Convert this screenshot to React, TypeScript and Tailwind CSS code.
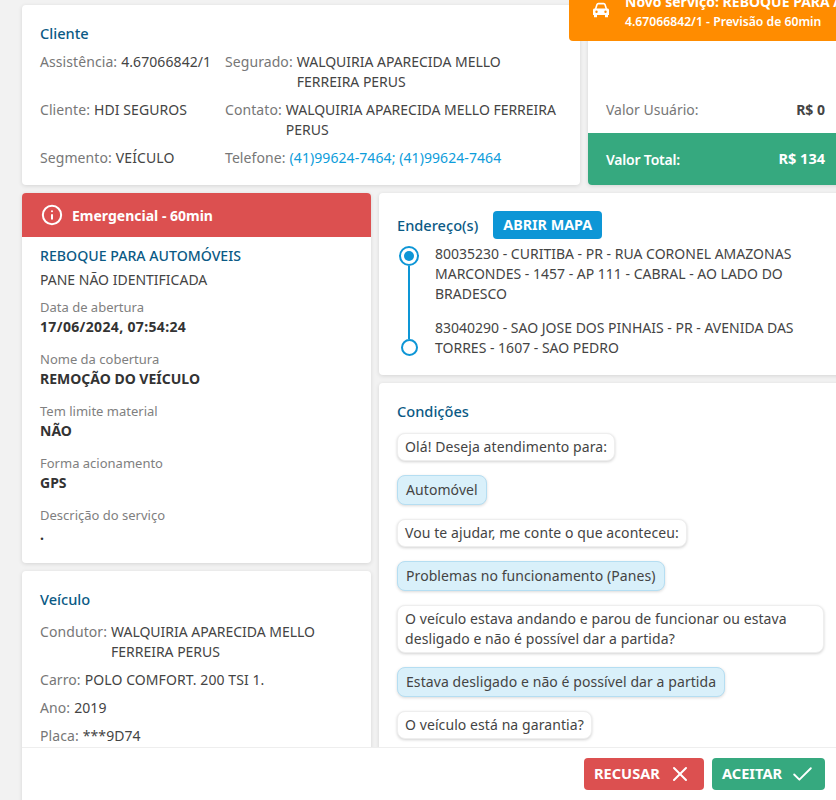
import { Check, Info, X } from 'lucide-react'

const cardClass = 'rounded bg-white shadow-[0_1px_4px_rgba(0,0,0,0.12)]'
const headingClass = 'text-[14.6px] leading-5 text-[#0b5a85] font-medium'

function Field({ label, children }: { label: string; children: React.ReactNode }) {
  return (
    <div className="flex leading-5 tracking-[0.08px]">
      <span className="shrink-0 pr-1 text-[#777]">{label}</span>
      <span className="text-[#444]">{children}</span>
    </div>
  )
}

function Name({ children }: { children: string }) {
  return <span className="tracking-[-0.02px]">{children}</span>
}

function Detail({ label, value, wide }: { label: string; value: string; wide?: boolean }) {
  return (
    <div>
      <div className="text-[13px] leading-5 text-[#808080]">{label}</div>
      <div className={`font-bold leading-5 text-[#333] ${wide ? 'tracking-[0.35px]' : ''}`}>{value}</div>
    </div>
  )
}

function Bubble({ text, answer }: { text: string; answer?: boolean }) {
  return (
    <div
      className={
        answer
          ? 'w-fit rounded-lg border border-[#b5def2] bg-[#d9f0fa] px-2 py-[4px] leading-5 tracking-[0.08px] text-[#444] shadow-[0_1px_3px_rgba(0,0,0,0.15)]'
          : 'w-fit rounded-lg border border-[#eee] bg-white px-[7px] py-[3px] leading-5 tracking-[0.08px] text-[#444] shadow-[0_1px_3px_rgba(0,0,0,0.18)]'
      }
    >
      {text}
    </div>
  )
}

function CarIcon() {
  return (
    <svg viewBox="0 0 18 16" className="mt-[2px] h-[16px] w-[18px] shrink-0 self-start" fill="currentColor">
      <path d="M3.6 7 5 2.600C5.200 2 5.700 1.600 6.300 1.600h5.400c.6 0 1.100.4 1.300 1L14.400 7" fill="none" stroke="currentColor" strokeWidth="1.600" />
      <path
        fillRule="evenodd"
        d="M2.500 6.500h13c.8 0 1.500.7 1.500 1.500v5H1V8c0-.8.7-1.500 1.500-1.500ZM4.500 8.500a1.200 1.200 0 1 0 0 2.400 1.200 1.200 0 0 0 0-2.400Zm9 0a1.200 1.200 0 1 0 0 2.400 1.200 1.200 0 0 0 0-2.400Z"
      />
      <path d="M2 13h3v2.200H2zM13 13h3v2.200h-3z" />
    </svg>
  )
}

export default function App() {
  return (
    <div className="relative h-[800px] w-[836px] overflow-hidden bg-[#f2f2f2] pl-[22px] pt-[5px] font-['Noto_Sans','Open_Sans',sans-serif] text-[14px]">
      {/* Novo serviço banner */}
      <div className="absolute right-0 top-0 z-20 flex h-[41px] w-[267px] items-end gap-[15px] overflow-hidden rounded-bl bg-[#ff8c00] pb-[11px] pl-[23px] text-white">
        <CarIcon />
        <div className="whitespace-nowrap">
          <div className="text-[14px] font-bold leading-5">Novo serviço: REBOQUE PARA AUTOMÓVEIS</div>
          <div className="-mb-[2px] text-[12.2px] font-semibold leading-5">4.67066842/1 - Previsão de 60min</div>
        </div>
      </div>

      <div className="flex w-[820px] gap-2">
        {/* Cliente */}
        <section className={`${cardClass} h-[180px] w-[558px] shrink-0 px-[18px] pt-[18px]`}>
          <h2 className={headingClass}>Cliente</h2>
          <div className="mt-[9px] grid grid-cols-[185px_1fr] gap-y-[8px]">
            <Field label="Assistência:">4.67066842/1</Field>
            <Field label="Segurado:"><Name>WALQUIRIA APARECIDA MELLO FERREIRA PERUS</Name></Field>
            <Field label="Cliente:">HDI SEGUROS</Field>
            <Field label="Contato:"><Name>WALQUIRIA APARECIDA MELLO FERREIRA PERUS</Name></Field>
            <Field label="Segmento:">VEÍCULO</Field>
            <Field label="Telefone:">
              <span className="text-[#0d9ddb]">(41)99624-7464; (41)99624-7464</span>
            </Field>
          </div>
        </section>

        {/* Valores */}
        <section className={`${cardClass} flex h-[180px] w-[254px] shrink-0 flex-col justify-end overflow-hidden`}>
          <div className="flex h-[33px] items-start justify-between pl-[18px] pr-[17px] leading-5">
            <span className="text-[#777]">Valor Usuário:</span>
            <span className="font-bold text-[#444]">R$ 0</span>
          </div>
          <div className="flex h-[52px] items-center justify-between bg-[#36a97f] pl-[18px] pr-[17px] text-white">
            <span className="font-semibold tracking-[-0.2px]">Valor Total:</span>
            <span className="text-[14.5px] font-bold">R$ 134</span>
          </div>
        </section>
      </div>

      <div className="mt-2 flex w-[820px] gap-2">
        {/* Coluna esquerda */}
        <div className="flex w-[349px] shrink-0 flex-col gap-2">
          <section className={`${cardClass} h-[370px] overflow-hidden`}>
            <div className="flex h-[44px] items-center gap-[9px] bg-[#dc5050] pl-[19px] font-bold text-white">
              <Info className="h-[22px] w-[22px]" strokeWidth={2.2} />
              Emergencial - 60min
            </div>
            <div className="px-[18px] pt-[9px]">
              <h2 className="text-[14.15px] font-medium leading-5 text-[#0b5a85]">REBOQUE PARA AUTOMÓVEIS</h2>
              <div className="mt-[4px] leading-5 text-[#444]">PANE NÃO IDENTIFICADA</div>
              <div className="mt-[7px] flex flex-col gap-[12px]">
                <Detail label="Data de abertura" value="17/06/2024, 07:54:24" wide />
                <Detail label="Nome da cobertura" value="REMOÇÃO DO VEÍCULO" />
                <Detail label="Tem limite material" value="NÃO" />
                <Detail label="Forma acionamento" value="GPS" />
                <Detail label="Descrição do serviço" value="." />
              </div>
            </div>
          </section>
          <section className={`${cardClass} h-[300px] px-[18px] pt-[18px]`}>
            <h2 className={headingClass}>Veículo</h2>
            <div className="mt-[13px] flex flex-col gap-[8px]">
              <Field label="Condutor:"><Name>WALQUIRIA APARECIDA MELLO FERREIRA PERUS</Name></Field>
              <Field label="Carro:">POLO COMFORT. 200 TSI 1.</Field>
              <Field label="Ano:">2019</Field>
              <Field label="Placa:">***9D74</Field>
            </div>
          </section>
        </div>

        {/* Coluna direita */}
        <div className="flex w-[463px] shrink-0 flex-col gap-2">
          <section className={`${cardClass} h-[182px] pl-[18px] pr-[30px] pt-[18px]`}>
            <div className="flex items-center gap-[15px]">
              <h2 className={headingClass}>Endereço(s)</h2>
              <span className="rounded bg-[#0d96d6] px-[10px] py-[3px] text-[14.3px] font-bold leading-[22px] text-white">
                ABRIR MAPA
              </span>
            </div>
            <div className="mt-[3px] flex gap-[16px]">
              <div className="ml-[2px] flex w-[20px] shrink-0 flex-col items-center pt-[4px]">
                <div className="flex h-[20px] w-[20px] items-center justify-center rounded-full border-2 border-[#0d96d6]">
                  <div className="h-[10px] w-[10px] rounded-full bg-[#0d96d6]" />
                </div>
                <div className="h-[73px] w-[2px] bg-[#0d96d6]" />
                <div className="h-[17px] w-[17px] rounded-full border-2 border-[#0d96d6]" />
              </div>
              <div className="pt-[2px] leading-5 text-[#444]">
                <p>80035230 - CURITIBA - PR - RUA CORONEL AMAZONAS MARCONDES - 1457 - AP 111 - CABRAL - AO LADO DO BRADESCO</p>
                <p className="mt-[14px]">83040290 - SAO JOSE DOS PINHAIS - PR - AVENIDA DAS TORRES - 1607 - SAO PEDRO</p>
              </div>
            </div>
          </section>
          <section className={`${cardClass} h-[380px] px-[18px] pt-[18px]`}>
            <h2 className={headingClass}>Condições</h2>
            <div className="mt-[12px] flex flex-col gap-[14px]">
              <Bubble text="Olá! Deseja atendimento para:" />
              <Bubble answer text="Automóvel" />
              <Bubble text="Vou te ajudar, me conte o que aconteceu:" />
              <Bubble answer text="Problemas no funcionamento (Panes)" />
              <Bubble text="O veículo estava andando e parou de funcionar ou estava desligado e não é possível dar a partida?" />
              <Bubble answer text="Estava desligado e não é possível dar a partida" />
              <Bubble text="O veículo está na garantia?" />
            </div>
          </section>
        </div>
      </div>

      {/* Barra de ações */}
      <div className="absolute bottom-0 left-[22px] right-0 z-10 flex h-[53px] items-center justify-end gap-[8px] border-t border-[#eee] bg-white pr-[11px]">
        <button className="flex h-[32px] w-[120px] items-center gap-[8px] rounded bg-[#dc5050] pl-[10px] text-[14.6px] font-bold text-white">
          RECUSAR <X className="h-[24px] w-[24px]" strokeWidth={2} />
        </button>
        <button className="flex h-[32px] w-[113px] items-center gap-[8px] rounded bg-[#36a97f] pl-[10px] text-[14.6px] font-bold text-white">
          ACEITAR <Check className="h-[25px] w-[25px]" strokeWidth={1.8} />
        </button>
      </div>
    </div>
  )
}
